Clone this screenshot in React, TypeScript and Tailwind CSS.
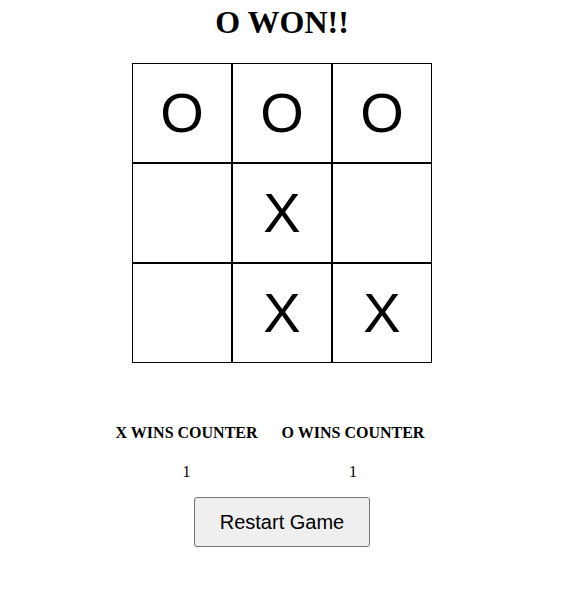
const board = ["O", "O", "O", "", "X", "", "", "X", "X"]

const counters = [
  { label: "X WINS COUNTER", wins: 1 },
  { label: "O WINS COUNTER", wins: 1 },
]

export default function App() {
  return (
    <div className="w-[564px] flex flex-col items-center bg-white text-black font-['Liberation_Serif',serif]">
      <h1 className="mt-1 mb-[22px] text-[32px] leading-[37px] font-bold">O WON!!</h1>
      <div className="grid grid-cols-3 w-[300px]">
        {board.map((cell, i) => (
          <div
            key={i}
            className="h-[100px] border border-black flex items-center justify-center font-['Liberation_Sans',sans-serif] text-[56px] leading-none"
          >
            {cell}
          </div>
        ))}
      </div>
      <div className="flex justify-center mt-[61px]">
        {counters.map((c) => (
          <div key={c.label} className="mr-6 text-center">
            <h4 className="text-base leading-[18px] font-bold">{c.label}</h4>
            <p className="mt-[21px] text-base leading-[18px]">{c.wins}</p>
          </div>
        ))}
      </div>
      <button className="mt-4 mb-4 w-[176px] h-[50px] bg-[#efefef] border border-[#767676] rounded-[3px] font-['Liberation_Sans',sans-serif] text-[20px] text-black">
        Restart Game
      </button>
    </div>
  )
}
